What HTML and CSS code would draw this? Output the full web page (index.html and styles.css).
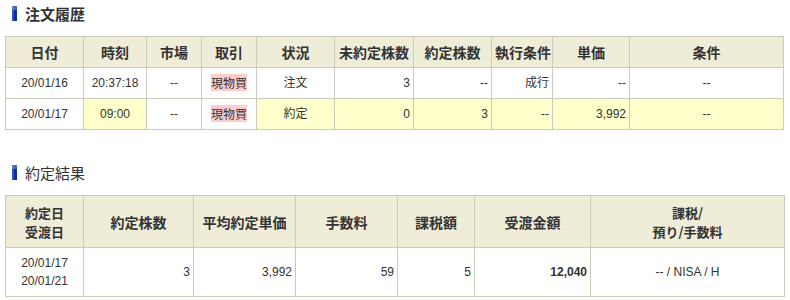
FILE: index.html
```html
<!DOCTYPE html>
<html lang="ja">
<head>
<meta charset="utf-8">
<link rel="stylesheet" href="styles.css">
</head>
<body>
<div class="page">
  <h2 class="heading heading--bold"><span class="bar"></span>注文履歴</h2>
  <table class="grid grid--orders">
    <colgroup>
      <col class="w78"><col class="w63"><col class="w55"><col class="w55"><col class="w78">
      <col class="w79"><col class="w78"><col class="w61"><col class="w77"><col class="w154">
    </colgroup>
    <thead>
      <tr class="head1">
        <th>日付</th><th>時刻</th><th>市場</th><th>取引</th><th>状況</th>
        <th>未約定株数</th><th>約定株数</th><th>執行条件</th><th>単価</th><th>条件</th>
      </tr>
    </thead>
    <tbody>
      <tr class="row">
        <td class="c">20/01/16</td><td class="c">20:37:18</td><td class="c">--</td>
        <td class="c"><span class="buy">現物買</span></td><td class="c">注文</td>
        <td class="r">3</td><td class="r">--</td><td class="r">成行</td><td class="r">--</td><td class="c">--</td>
      </tr>
      <tr class="row">
        <td class="c">20/01/17</td><td class="c hl">09:00</td><td class="c">--</td>
        <td class="c"><span class="buy">現物買</span></td><td class="c hl">約定</td>
        <td class="r hl">0</td><td class="r hl">3</td><td class="r hl">--</td><td class="r hl">3,992</td><td class="c hl">--</td>
      </tr>
    </tbody>
  </table>

  <h2 class="heading heading--second"><span class="bar"></span>約定結果</h2>
  <table class="grid grid--results">
    <colgroup>
      <col class="w78"><col class="w110"><col class="w102"><col class="w102"><col class="w77"><col class="w116"><col class="w194">
    </colgroup>
    <thead>
      <tr class="head2">
        <th><span class="ln">約定日</span><span class="ln">受渡日</span></th><th>約定株数</th><th>平均約定単価</th><th>手数料</th>
        <th>課税額</th><th>受渡金額</th><th><span class="ln">課税/</span><span class="ln">預り/手数料</span></th>
      </tr>
    </thead>
    <tbody>
      <tr class="row2">
        <td class="c"><span class="ln">20/01/17</span><span class="ln">20/01/21</span></td><td class="r">3</td><td class="r">3,992</td>
        <td class="r">59</td><td class="r">5</td><td class="r strong">12,040</td><td class="c">-- / NISA / H</td>
      </tr>
    </tbody>
  </table>
</div>
</body>
</html>
```

FILE: styles.css
```css
html, body {
  margin: 0;
  padding: 0;
  background: #ffffff;
}

body {
  font-family: "Liberation Sans", Arial, "Noto Sans CJK JP", sans-serif;
  font-size: 12px;
  color: #333333;
}

.page {
  padding: 0 6px 0 5px;
}

.heading {
  display: flex;
  align-items: center;
  margin: 0;
  padding: 6px 0 0 7px;
  height: 15px;
  font-size: 15px;
  line-height: 15px;
  color: #333333;
  font-weight: normal;
  font-family: "Noto Sans CJK JP", sans-serif;
}

.heading--bold {
  font-weight: bold;
}

.heading--second {
  padding-top: 35px;
  font-weight: normal;
}

.bar {
  display: inline-block;
  width: 5px;
  height: 15px;
  margin-right: 8px;
  background: linear-gradient(90deg, #2b55c0 0 2px, #0a2f9a 2px 5px);
  box-shadow: inset 0 4px 0 rgba(255,255,255,0.25);
}

.grid {
  border-collapse: collapse;
  table-layout: fixed;
  width: 779px;
  margin-top: 15px;
}

.grid th,
.grid td {
  border: 1px solid #cdcabb;
  padding: 0 3px;
  overflow: hidden;
  white-space: nowrap;
}

.grid th {
  background: #efecd8;
  font-family: "Noto Sans CJK JP", sans-serif;
  font-size: 14px;
  font-weight: bold;
  color: #333333;
  text-align: center;
  line-height: 18px;
}

.grid td {
  line-height: 18px;
}

.ln {
  display: block;
  height: 18px;
  line-height: 18px;
}

.head2 .ln {
  height: 19px;
  line-height: 19px;
  font-size: 13px;
}

.head1 th { height: 30px; }
.row td { height: 30px; }
.head2 th { height: 51px; }
.row2 td { height: 48px; }

.c { text-align: center; }
.r { text-align: right; }
.hl { background: #ffffcc; }
.strong { font-weight: bold; }

.buy {
  background: #ffcccc;
  font-family: "Noto Sans CJK JP", sans-serif;
  font-size: 12px;
}

.w55 { width: 55px; }
.w61 { width: 61px; }
.w63 { width: 63px; }
.w77 { width: 77px; }
.w78 { width: 78px; }
.w79 { width: 79px; }
.w102 { width: 102px; }
.w110 { width: 110px; }
.w116 { width: 116px; }
.w154 { width: 154px; }
.w194 { width: 194px; }
```
